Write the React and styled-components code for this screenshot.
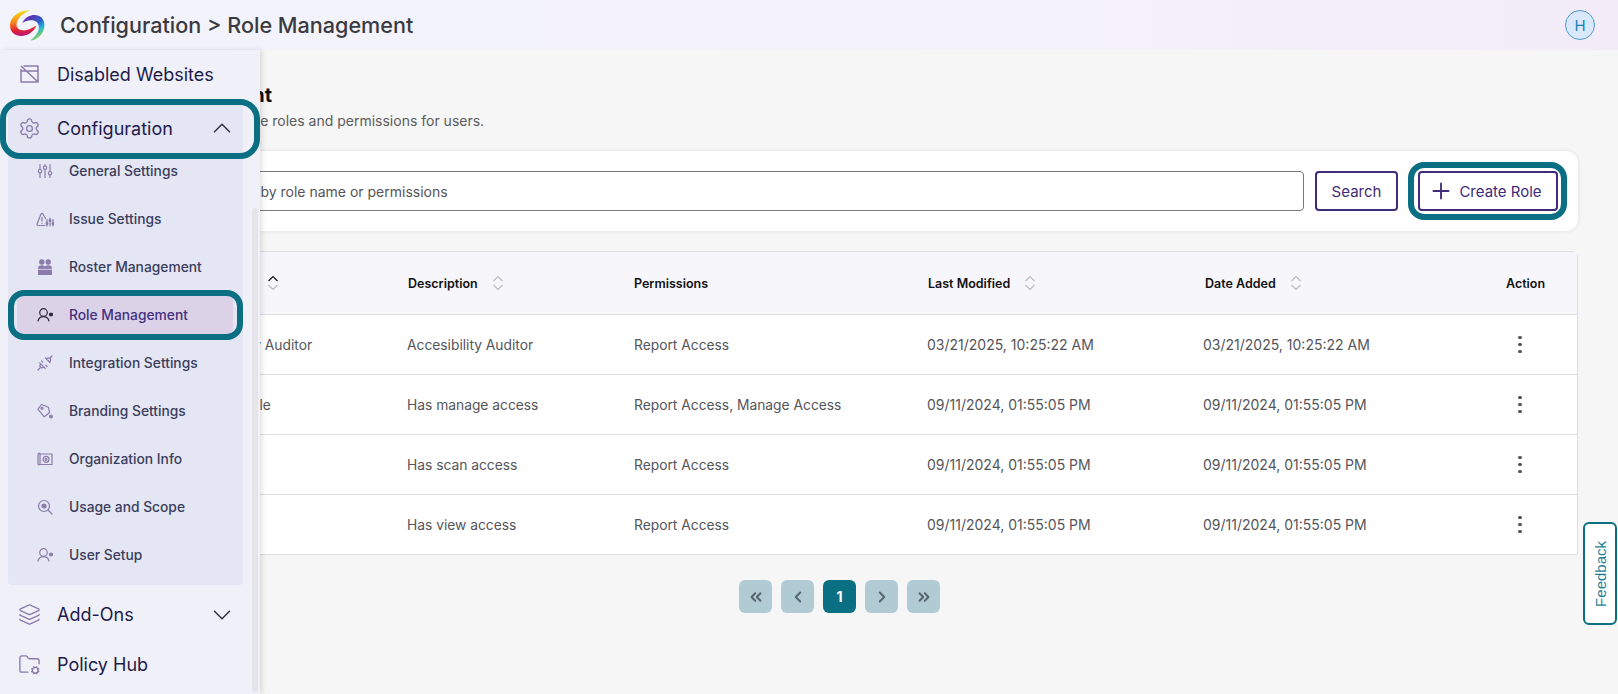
import styled, { createGlobalStyle } from "styled-components";
import {
  ChevronDown,
  ChevronLeft,
  ChevronRight,
  ChevronUp,
  ChevronsLeft,
  ChevronsRight,
  FolderCog,
  Layers,
  Plus,
  Settings,
} from "lucide-react";

const GlobalStyle = createGlobalStyle`
  html, body { margin: 0; padding: 0; height: 100%; }
  body {
    font-family: Inter, "Noto Sans", sans-serif;
    background: #f6f6f6;
    overflow: hidden;
  }
  * { box-sizing: border-box; }
`;

const Page = styled.div`
  position: relative;
  width: 1618px;
  height: 694px;
  overflow: hidden;
  background: #f6f6f6;
`;
const Header = styled.header`
  height: 50px;
  display: flex;
  align-items: center;
  padding: 0 23px 0 10px;
  background: linear-gradient(90deg, #f3f3fb 0%, #f3f2fa 60%, #f3ecf8 100%);
`;
const Crumb = styled.h1`
  margin: 0 0 0 15px;
  font-size: 21.6px;
  font-weight: 500;
  color: #3a3a40;
  flex: 1;
`;
const Avatar = styled.div`
  width: 30px;
  height: 30px;
  border-radius: 50%;
  background: #d9e8fb;
  border: 1px solid #4d9ccc;
  color: #1a7fb8;
  font-size: 15px;
  display: flex;
  align-items: center;
  justify-content: center;
`;
const Main = styled.main`
  padding: 32px 40px 0 100px;
`;
const Title = styled.h2`
  margin: 0 0 0 -4px;
  font-size: 20px;
  line-height: 26px;
  font-weight: 700;
  color: #111;
`;
const Subtitle = styled.p`
  margin: 2px 0 0 6px;
  font-size: 14px;
  line-height: 22px;
  color: #5b5b60;
`;
const SearchCard = styled.section`
  margin-top: 19px;
  height: 80px;
  padding: 20px 20px;
  display: flex;
  gap: 11px;
  background: #fff;
  border-radius: 12px;
  box-shadow: 0 0 4px rgba(0, 0, 0, 0.1);
`;
const SearchInput = styled.div`
  flex: 1;
  height: 40px;
  display: flex;
  align-items: center;
  padding-left: 89px;
  border: 1px solid #77777c;
  border-radius: 4px;
  background: #fff;
  font-size: 14px;
  color: #55555a;
`;
const OutlineButton = styled.button`
  position: relative;
  height: 40px;
  width: ${(p) => p.$width}px;
  margin-left: ${(p) => p.$offset || 0}px;
  display: flex;
  align-items: center;
  justify-content: center;
  gap: 5px;
  padding: 0 ${(p) => p.$shift || 0}px 0 0;
  border: 2px solid #3f2b78;
  border-radius: 4px;
  background: #fff;
  color: #3f2b78;
  font-family: inherit;
  font-size: 15px;
`;
const Callout = styled.span`
  position: absolute;
  top: ${(p) => p.$y}px;
  bottom: ${(p) => p.$y}px;
  left: ${(p) => p.$left}px;
  right: ${(p) => p.$right}px;
  border: 6px solid #0b6f84;
  border-radius: ${(p) => p.$radius}px;
  pointer-events: none;
  z-index: 3;
`;
const Table = styled.section`
  margin-top: 20px;
  background: #fff;
  border: 1px solid #dedee0;
  border-radius: 6px 6px 0 0;
`;
const Row = styled.div`
  display: grid;
  grid-template-columns: 307px 227px 293px 277px 1fr 102px;
  align-items: center;
  height: ${(p) => (p.$head ? 62 : 60)}px;
  background: ${(p) => (p.$head ? "#f6f6fb" : "#fff")};
  border-top: ${(p) => (p.$first ? "none" : "1px solid #dedee0")};
`;
const HeadCell = styled.div`
  display: flex;
  align-items: center;
  gap: ${(p) => p.$gap || 14}px;
  font-size: 12.5px;
  font-weight: 600;
  color: #111;
  margin-left: ${(p) => p.$pad || 0}px;
`;
const Cell = styled.div`
  font-size: ${(p) => p.$size || 13.8}px;
  color: #55555a;
  margin-left: ${(p) => p.$pad ?? -1}px;
`;
const ActionCell = styled.div`
  display: flex;
  flex-direction: column;
  align-items: center;
  gap: 3.5px;
  width: 60px;
  margin-left: 15px;
`;
const Dot = styled.i`
  width: 3.5px;
  height: 3.5px;
  border-radius: 50%;
  background: #555;
`;
const Pager = styled.nav`
  display: flex;
  justify-content: center;
  gap: 9px;
  margin: 25px 0 0 1px;
`;
const PageBtn = styled.div`
  width: 33px;
  height: 33px;
  display: flex;
  align-items: center;
  justify-content: center;
  border-radius: 6px;
  background: ${(p) => (p.$active ? "#0b6f84" : "#b0cbd3")};
  color: ${(p) => (p.$active ? "#fff" : "#56646d")};
  font-size: 14px;
  font-weight: 700;
`;
const Feedback = styled.div`
  position: absolute;
  top: 522px;
  right: 1px;
  width: 34px;
  height: 103px;
  display: flex;
  align-items: center;
  justify-content: center;
  background: #fff;
  border: 2px solid #0b6f84;
  border-radius: 6px;
  color: #1f7f96;
  font-family: "Liberation Sans", Arial, sans-serif;
  font-size: 15px;
  span {
    writing-mode: vertical-rl;
    transform: rotate(180deg);
  }
`;
const Sidebar = styled.aside`
  position: absolute;
  top: 50px;
  left: 0;
  bottom: 0;
  width: 260px;
  padding: 0 17px 0 8px;
  background: #f0f1f8;
  box-shadow: 2px 0 5px rgba(0, 0, 0, 0.12);
  z-index: 2;
`;
const Thumb = styled.div`
  position: absolute;
  top: 158px;
  left: 252px;
  width: 6px;
  height: 484px;
  border-radius: 3px;
  background: #e5e5e9;
`;
const NavRow = styled.div`
  position: relative;
  height: ${(p) => p.$height || 50}px;
  display: flex;
  align-items: center;
  gap: 16px;
  padding: 0 6px ${(p) => p.$lift || 0}px 10px;
  font-size: 18px;
  color: #1e1a4b;
  svg.lead {
    color: #8a7bab;
    flex: none;
  }
  svg.chev {
    margin-left: auto;
    color: #2f3340;
  }
`;
const Group = styled.div`
  margin: 5px 0;
  padding-bottom: 6px;
  background: #e4e6f3;
  border-radius: 4px;
`;
const SubList = styled.div`
  margin-top: -6.5px;
`;
const SubItem = styled.div`
  position: relative;
  height: 48px;
  display: flex;
  align-items: center;
  color: ${(p) => (p.$active ? "#45307f" : "#3a3d5c")};
  font-size: 13.8px;
  font-weight: 500;
  padding-left: 9px;
`;
const SubInner = styled.div`
  width: 216px;
  height: 41px;
  display: flex;
  align-items: center;
  gap: 15px;
  padding-left: 19px;
  border-radius: 6px;
  background: ${(p) => (p.$active ? "#dcd2e8" : "transparent")};
  color: inherit;
`;
const SubIcon = styled.span`
  width: 18px;
  display: flex;
  justify-content: center;
  flex: none;
  color: ${(p) => (p.$active ? "#2b2b3a" : "#8a7bab")};
`;

const Svg = ({ children, ...rest }) => (
  <svg
    width="16"
    height="16"
    viewBox="0 0 16 16"
    fill="none"
    stroke="currentColor"
    strokeWidth="1.2"
    strokeLinecap="round"
    strokeLinejoin="round"
    {...rest}
  >
    {children}
  </svg>
);

const DisabledIcon = () => (
  <svg className="lead" width="23" height="23" viewBox="-1.5 -1.5 23 23" fill="none" stroke="currentColor" strokeWidth="1.5" strokeLinejoin="round">
    <path d="M4 1.500h14.500v16H1.500v-13M1.500 6.500h17M1.500 1.500l17 16" />
  </svg>
);
const SlidersIcon = () => (
  <Svg>
    <path d="M3 1.500v5M3 10v4.500M8 1.500v1.500M8 6.500v8M13 1.500v7M13 12v2.500" />
    <circle cx="3" cy="8.200" r="1.700" />
    <circle cx="8" cy="4.700" r="1.700" />
    <circle cx="13" cy="10.200" r="1.700" />
  </Svg>
);
const IssueIcon = () => (
  <Svg width="18" viewBox="0 0 18 16">
    <path d="M9 14.500H2.200c-1 0-1.500-.8-1-1.700L5 3c.5-.9 1.500-.9 2 0l2.500 4.500" />
    <path d="M6 6.500v3.500M6 12v.3" />
    <path d="M11 8.500v6.500M14 7v8M17 8.500v6.500" />
    <circle cx="11" cy="12.500" r=".9" fill="currentColor" />
    <circle cx="14" cy="9.500" r=".9" fill="currentColor" />
    <circle cx="17" cy="12.500" r=".9" fill="currentColor" />
  </Svg>
);
const RosterIcon = () => (
  <Svg strokeWidth="0" fill="currentColor">
    <circle cx="4.800" cy="3" r="2.700" />
    <circle cx="11.200" cy="3" r="2.700" />
    <path d="M1 9.500c0-2 1.300-3.200 3.800-3.200 1.400 0 2.500.5 3.200 1.500.7-1 1.800-1.500 3.200-1.500 2.500 0 3.800 1.200 3.800 3.200V16H1z" />
    <path d="M1 10.300h14" stroke="#e4e6f3" strokeWidth=".8" />
  </Svg>
);
const UserGearIcon = () => (
  <Svg width="17" viewBox="0 0 17 16">
    <circle cx="6.500" cy="5.500" r="3.800" />
    <path d="M1 14c.6-2.800 2.600-4.400 5.500-4.400S11.400 11.200 12 14" />
    <circle cx="14" cy="7.500" r="1.500" fill="currentColor" />
  </Svg>
);
const PlugIcon = () => (
  <Svg>
    <path d="M1 15l2.500-2.500" />
    <path d="M2.700 7.800 8.200 13.300M3.800 8.900c-1.200 1.200-1.200 2.300-.3 3.200.9.900 2.200 1 3.400-.2" />
    <path d="M15 1l-1.500 1.500" />
    <path d="M8.500 3 13 7.500M9.500 4c1.200-1.200 2.500-1.400 3.500-.5.900.9.800 2.200-.4 3.400" />
    <path d="M5.800 7.200 4.500 5.900M8.800 10.200l1.300 1.300" />
  </Svg>
);
const TagIcon = () => (
  <Svg>
    <path d="M4.500 1.500.9 6.200l6.300 7.600 5.400-4.100-1.200-5.500z" />
    <circle cx="5" cy="5.300" r="1" />
    <circle cx="14" cy="13.500" r="1.300" fill="currentColor" />
  </Svg>
);
const OrgIcon = () => (
  <Svg>
    <path d="M1 3c1-1.300 2-1.300 2 0v10c0 1-1 1-2 0zM3 3h12v10.500H3" />
    <circle cx="9" cy="8.300" r="3" />
    <circle cx="9" cy="8.300" r="1" />
  </Svg>
);
const UsageIcon = () => (
  <Svg>
    <circle cx="7" cy="7" r="5.500" />
    <circle cx="7" cy="7" r="2" fill="currentColor" />
    <path d="M11 11l4 4" />
  </Svg>
);

const SortIcon = ({ active }) => (
  <svg width="12" height="18" viewBox="0 0 12 18" fill="none" strokeWidth="1.1">
    <path d="M1.500 7 6 2.500 10.500 7" stroke={active ? "#111" : "#b9b9bd"} />
    <path d="M1.500 11 6 15.500 10.500 11" stroke="#b9b9bd" />
  </svg>
);

const Logo = () => (
  <svg width="35" height="31" viewBox="0 0 34.500 30.500">
    <defs>
      <linearGradient id="swirlA" x1="0.6" y1="0" x2="0.7" y2="1">
        <stop offset="0" stopColor="#f7dc12" />
        <stop offset="0.4" stopColor="#f58a1f" />
        <stop offset="0.72" stopColor="#e8252e" />
        <stop offset="1" stopColor="#b5127f" />
      </linearGradient>
      <linearGradient id="swirlB" x1="0.1" y1="0.15" x2="0.65" y2="1">
        <stop offset="0" stopColor="#6a2bb0" />
        <stop offset="0.45" stopColor="#2a62c8" />
        <stop offset="0.68" stopColor="#21b6d6" />
        <stop offset="1" stopColor="#a5d64a" />
      </linearGradient>
    </defs>
    <path d="M20 .5C10-.5 0 6 0 15c0 7 5 10.500 11 10.500 7 0 13-4.500 15-10.500-4 3-9 5.500-13.500 5C8 19.500 6 17 6.500 13.500 7 9 12 3 20 .5z" fill="url(#swirlA)" />
    <path d="M12 13c3-6 8-8 12-8 6 0 10 4 10 10 0 8-7 15-14 15 5-4 8.500-8 8.500-13 0-4.500-3.500-7-7.500-7-3.500 0-7 1-9 3z" fill="url(#swirlB)" />
  </svg>
);

const subItems = [
  ["General Settings", <SlidersIcon key="a" />],
  ["Issue Settings", <IssueIcon key="b" />],
  ["Roster Management", <RosterIcon key="c" />],
  ["Role Management", <UserGearIcon key="d" />, true],
  ["Integration Settings", <PlugIcon key="e" />],
  ["Branding Settings", <TagIcon key="f" />],
  ["Organization Info", <OrgIcon key="g" />],
  ["Usage and Scope", <UsageIcon key="h" />],
  ["User Setup", <UserGearIcon key="i" />],
];

const roles = [
  ["Accesibility Auditor", "Accesibility Auditor", "Report Access", "03/21/2025, 10:25:22 AM"],
  ["Manage Role", "Has manage access", "Report Access, Manage Access", "09/11/2024, 01:55:05 PM"],
  ["Scan Role", "Has scan access", "Report Access", "09/11/2024, 01:55:05 PM"],
  ["View Role", "Has view access", "Report Access", "09/11/2024, 01:55:05 PM"],
];

export default function App() {
  return (
    <Page>
      <GlobalStyle />
      <Header>
        <Logo />
        <Crumb>Configuration &gt; Role Management</Crumb>
        <Avatar>H</Avatar>
      </Header>
      <Main>
        <Title>Role Management</Title>
        <Subtitle>Create, edit and manage roles and permissions for users.</Subtitle>
        <SearchCard>
          <SearchInput>Search by role name or permissions</SearchInput>
          <OutlineButton $width={83}>Search</OutlineButton>
          <OutlineButton $width={140} $offset={9} $shift={6}>
            <Plus size={26} strokeWidth={1.7} />
            Create Role
            <Callout $y={-11} $left={-12} $right={-11} $radius={16} />
          </OutlineButton>
        </SearchCard>
        <Table>
          <Row $head $first>
            <HeadCell $pad={85} $gap={16}>
              Role Name <SortIcon active />
            </HeadCell>
            <HeadCell>
              Description <SortIcon />
            </HeadCell>
            <HeadCell $pad={-1}>Permissions</HeadCell>
            <HeadCell>
              Last Modified <SortIcon />
            </HeadCell>
            <HeadCell>
              Date Added <SortIcon />
            </HeadCell>
            <HeadCell $pad={31}>Action</HeadCell>
          </Row>
          {roles.map((r) => (
            <Row key={r[0]}>
              <Cell $pad={85}>{r[0]}</Cell>
              <Cell>{r[1]}</Cell>
              <Cell>{r[2]}</Cell>
              <Cell $size={14}>{r[3]}</Cell>
              <Cell $size={14} $pad={-2}>{r[3]}</Cell>
              <ActionCell>
                <Dot />
                <Dot />
                <Dot />
              </ActionCell>
            </Row>
          ))}
        </Table>
        <Pager>
          <PageBtn><ChevronsLeft size={18} strokeWidth={2.5} /></PageBtn>
          <PageBtn><ChevronLeft size={18} strokeWidth={2.5} /></PageBtn>
          <PageBtn $active>1</PageBtn>
          <PageBtn><ChevronRight size={18} strokeWidth={2.5} /></PageBtn>
          <PageBtn><ChevronsRight size={18} strokeWidth={2.5} /></PageBtn>
        </Pager>
      </Main>
      <Sidebar>
        <NavRow $lift={2}>
          <DisabledIcon />
          Disabled Websites
        </NavRow>
        <Group>
          <NavRow $height={48} $lift={2}>
            <Settings className="lead" size={23} strokeWidth={1.4} />
            Configuration
            <ChevronUp className="chev" size={30} strokeWidth={1.2} />
            <Callout $y={-6} $left={-8} $right={-17} $radius={20} />
          </NavRow>
          <SubList>
            {subItems.map(([label, icon, active]) => (
              <SubItem key={label} $active={active}>
                <SubInner $active={active}>
                  <SubIcon $active={active}>{icon}</SubIcon>
                  {label}
                </SubInner>
                {active && <Callout $y={-1} $left={0} $right={0} $radius={16} />}
              </SubItem>
            ))}
          </SubList>
        </Group>
        <NavRow>
          <Layers className="lead" size={23} strokeWidth={1.4} />
          Add-Ons
          <ChevronDown className="chev" size={30} strokeWidth={1.2} />
        </NavRow>
        <NavRow>
          <FolderCog className="lead" size={23} strokeWidth={1.4} />
          Policy Hub
        </NavRow>
        <Thumb />
      </Sidebar>
      <Feedback>
        <span>Feedback</span>
      </Feedback>
    </Page>
  );
}
